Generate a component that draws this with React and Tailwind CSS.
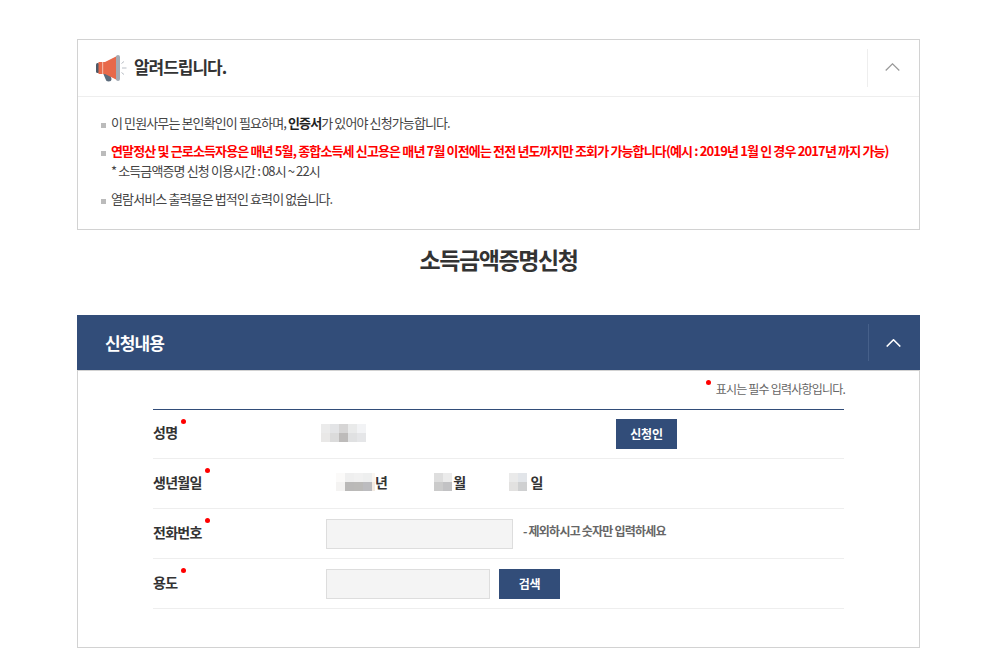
import React from 'react';

const fontStack = "font-['Noto_Sans_CJK_KR','Noto_Sans',sans-serif]";

const Megaphone = () => (
  <svg width="31" height="27" viewBox="0 0 31 27" className="shrink-0">
    <path d="M7 18 L14 18 L15.5 24 Q15.5 26.5 12.5 26.5 Q10 26.5 9.5 24 Z" fill="#5b6b7c" />
    <rect x="0" y="8" width="3.5" height="10" rx="1.5" fill="#4d5a68" />
    <path d="M2.5 7 L9 7 L9 19 L2.5 19 Z" fill="#e8694a" />
    <path d="M9 7 L21 1 L21 25 L9 19 Z" fill="#e8694a" />
    <rect x="6" y="7" width="1.2" height="12" fill="#f3b3a1" />
    <rect x="20" y="0" width="4" height="26" rx="2" fill="#a4abb4" />
    <path d="M26 13 H30.5 M25.5 8.5 L28 6.5 M25.5 17.5 L28 19.5" stroke="#b9bec5" strokeWidth="1" fill="none" />
  </svg>
);

const Chevron = ({ color, width = 1.2 }) => (
  <svg width="15" height="8" viewBox="0 0 15 8" className="shrink-0">
    <path d="M0.7 7.5 L7.5 0.8 L14.3 7.5" stroke={color} strokeWidth={width} fill="none" />
  </svg>
);

const Bullet = ({ children, className = '' }) => (
  <li className={`relative pl-[11px] ${className}`}>
    <span className="absolute left-[1px] top-[10px] h-[5px] w-[5px] bg-[#bbbbbb]" />
    {children}
  </li>
);

const Dot = ({ className }) => (
  <span className={`absolute h-[5px] w-[5px] rounded-full bg-[#ff0000] ${className}`} />
);

const Label = ({ children, dot }) => (
  <div className="relative w-[173px] shrink-0 pb-[3px] text-[14px] font-bold tracking-[-0.05em] text-[#333333]">
    <span>{children}</span>
    <Dot className={dot} />
  </div>
);

const Row = ({ children, className = 'h-[50px]' }) => (
  <div className={`flex items-center border-b border-[#eeeeee] ${className}`}>{children}</div>
);

const Input = ({ className }) => (
  <div className={`h-[30px] border border-[#dddddd] bg-[#f4f4f4] ${className}`} />
);

const Button = ({ children, className = '' }) => (
  <button className={`h-[30px] w-[61px] bg-[#324d79] text-[12px] font-bold tracking-[-0.02em] text-white ${className}`}>
    {children}
  </button>
);

export default function App() {
  return (
    <div className={`${fontStack} min-h-[672px] bg-white px-[77px] pt-[39px] pr-[82px]`}>
      <section className="h-[191px] border border-[#d2d2d2]">
        <div className="flex h-[57px] items-center border-b border-[#eeeeee] pl-[18px]">
          <Megaphone />
          <h2 className="ml-[7px] pb-[2px] text-[17px] font-bold tracking-[-0.06em] text-[#333333]">알려드립니다.</h2>
          <div className="ml-auto flex h-[38px] w-[52px] items-center justify-center border-l border-[#eeeeee] pb-[2px] pr-[2px]">
            <Chevron color="#999999" />
          </div>
        </div>
        <ul className="px-[22px] pt-[16px] text-[13px] leading-[20px] tracking-[-0.068em] text-[#444444]">
          <Bullet>
            이 민원사무는 본인확인이 필요하며, <b className="text-[#222222]">인증서</b>가 있어야 신청가능합니다.
          </Bullet>
          <Bullet className="mt-[8px]">
            <b className="whitespace-nowrap tracking-[-0.066em] text-[#ff0000]">
              연말정산 및 근로소득자용은 매년 5월, 종합소득세 신고용은 매년 7월 이전에는 전전 년도까지만 조회가 가능합니다(예시 : 2019년 1월 인 경우 2017년 까지 가능)
            </b>
            <p>* 소득금액증명 신청 이용시간 : 08시 ~ 22시</p>
          </Bullet>
          <Bullet className="mt-[8px]">열람서비스 출력물은 법적인 효력이 없습니다.</Bullet>
        </ul>
      </section>

      <h1 className="mt-[11px] text-center text-[23px] font-bold leading-[36px] tracking-[-0.06em] text-[#333333]">
        소득금액증명신청
      </h1>

      <section className="mt-[38px] h-[333px] border-x border-b border-[#d2d2d2]">
        <div className="-mx-px border-b border-[#d2d2d2]">
          <div className="flex h-[55px] items-center bg-[#324d79] pl-[28px]">
            <h2 className="text-[17px] font-bold tracking-[-0.05em] text-white">신청내용</h2>
            <div className="ml-auto flex h-[37px] w-[52px] items-center justify-center border-l border-[#46608a] pr-[2px]">
              <Chevron color="#ffffff" width={1.6} />
            </div>
          </div>
        </div>

        <div className="pl-[75px] pr-[75px]">
          <div className="relative flex h-[38px] items-center justify-end pb-[2px] text-[12px] tracking-[-0.066em] text-[#666666]">
            <Dot className="right-[133px] top-[9px]" />
            <span className="-mr-px">표시는 필수 입력사항입니다.</span>
          </div>
          <div className="border-t border-[#324d79]">
            <Row className="h-[49px]">
              <Label dot="left-[28px] -top-[3px]">성명</Label>
              <div className="-ml-[5px] mb-[3px] flex flex-col">
                <div className="flex">
                  <i className="h-[9px] w-[9px] bg-[#ebebeb]" />
                  <i className="h-[9px] w-[9px] bg-[#e3e4e6]" />
                  <i className="h-[9px] w-[9px] bg-[#d6d5d5]" />
                  <i className="h-[9px] w-[9px] bg-[#e9eaea]" />
                  <i className="h-[9px] w-[9px] bg-[#f2f3f5]" />
                </div>
                <div className="flex">
                  <i className="h-[9px] w-[9px] bg-[#e9e8e7]" />
                  <i className="h-[9px] w-[9px] bg-[#dbdbdb]" />
                  <i className="h-[9px] w-[9px] bg-[#bdbbba]" />
                  <i className="h-[9px] w-[9px] bg-[#e0e1e2]" />
                  <i className="h-[9px] w-[9px] bg-[#e5e6e8]" />
                </div>
              </div>
              <Button className="ml-[250px]">신청인</Button>
            </Row>
            <Row>
              <Label dot="left-[52px] -top-[4px]">생년월일</Label>
              <div className="ml-[10px] flex items-center pb-[3px] text-[14px] font-bold tracking-[-0.05em] text-[#333333]">
                <div className="flex w-[39px] flex-col">
                  <div className="flex">
                    <i className="h-[9px] w-[9px] bg-[#fbfaf9]" />
                    <i className="h-[9px] w-[9px] bg-[#efefef]" />
                    <i className="h-[9px] w-[9px] bg-[#f1f1f1]" />
                    <i className="h-[9px] w-[9px] bg-[#eeefef]" />
                    <i className="h-[9px] w-[3px] bg-[#faf6f1]" />
                  </div>
                  <div className="flex">
                    <i className="h-[9px] w-[9px] bg-[#f4f3f2]" />
                    <i className="h-[9px] w-[9px] bg-[#bab9b8]" />
                    <i className="h-[9px] w-[9px] bg-[#bbbab8]" />
                    <i className="h-[9px] w-[9px] bg-[#bcbcbf]" />
                    <i className="h-[9px] w-[3px] bg-[#f3ebe2]" />
                  </div>
                </div>
                <span>년</span>
                <div className="ml-[47px] flex flex-col">
                  <div className="flex">
                    <i className="h-[9px] w-[9px] bg-[#dedede]" />
                    <i className="h-[9px] w-[9px] bg-[#ebebeb]" />
                  </div>
                  <div className="flex">
                    <i className="h-[9px] w-[9px] bg-[#cbcbcb]" />
                    <i className="h-[9px] w-[9px] bg-[#c2c2c4]" />
                  </div>
                </div>
                <span className="ml-[1px]">월</span>
                <div className="ml-[44px] flex flex-col">
                  <div className="flex">
                    <i className="h-[9px] w-[9px] bg-[#eaeaea]" />
                    <i className="h-[9px] w-[9px] bg-[#e2e5e9]" />
                  </div>
                  <div className="flex">
                    <i className="h-[9px] w-[9px] bg-[#e2e1e0]" />
                    <i className="h-[9px] w-[9px] bg-[#cfd0d1]" />
                  </div>
                </div>
                <span className="ml-[3px]">일</span>
              </div>
            </Row>
            <Row>
              <Label dot="left-[52px] -top-[4px]">전화번호</Label>
              <Input className="w-[187px]" />
              <span className="ml-[10px] pb-[5px] text-[12px] font-bold tracking-[-0.065em] text-[#666666]">
                - 제외하시고 숫자만 입력하세요
              </span>
            </Row>
            <Row>
              <Label dot="left-[28px] -top-[4px]">용도</Label>
              <Input className="w-[164px]" />
              <Button className="ml-[9px]">검색</Button>
            </Row>
          </div>
        </div>
      </section>
    </div>
  );
}
